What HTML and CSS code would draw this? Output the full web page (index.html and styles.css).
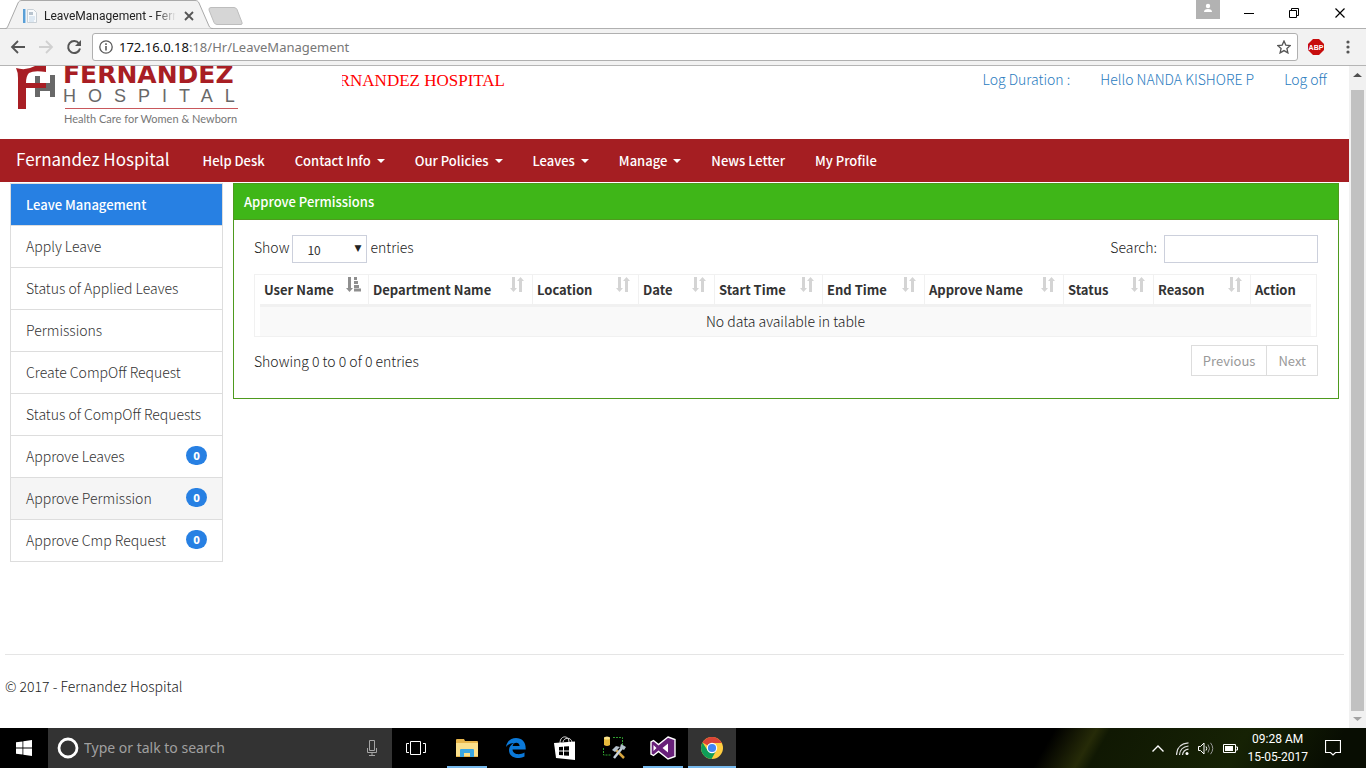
FILE: index.html
```html
<!DOCTYPE html>
<html lang="en">
<head>
<meta charset="utf-8">
<title>LeaveManagement - Fernandez Hospital</title>
<link rel="stylesheet" href="styles.css">
</head>
<body>
<svg class="defs" aria-hidden="true">
  <symbol id="sort-both" viewBox="0 0 16 17">
    <path d="M3 1h3v11h2l-3.500 4L1 12h2zM10 16V5H8l3.500-4L15 5h-2v11z"/>
  </symbol>
  <symbol id="sort-asc" viewBox="0 0 16 17">
    <path d="M3 1h3v11h2l-3.500 4L1 12h2zM9 1h3v3H9zM9 5h4v3H9zM9 9h5v3H9zM9 12.500h7v3H9z"/>
  </symbol>
</svg>

<div class="browser-tabs">
  <div class="tab">
    <svg class="tab-shape" viewBox="0 0 208 29" width="208" height="29"><path d="M0 28.500C2 28.500 2 28 3 26L13 3C14 1 15 .5 17 .5H190C192 .5 193 1 194 3L204 26C205 28 206 28.500 208 28.500" fill="#f2f2f2" stroke="#a9a9a9"/></svg>
    <svg class="tab-icon" width="16" height="16" viewBox="0 0 16 16"><path d="M1 1h2v14H1z" fill="#5a9fd6"/><path d="M3 1h1v14H3z" fill="#a9d0f0"/><path d="M5.500 1.500h6l3 3v10h-9z" fill="#f8fafc" stroke="#c9d0d6"/><path d="M7 4h4v3H7z" fill="#b8c4cf"/><path d="M7 9h6M7 11h6M7 13h5" stroke="#c2d6e8"/></svg>
    <span class="tab-title">LeaveManagement - Fernandez</span>
    <button class="plain" aria-label="Close tab"><svg width="10" height="10" viewBox="0 0 10 10"><path d="M1 1l8 8M9 1L1 9" stroke="#555" stroke-width="1.800"/></svg></button>
  </div>
  <button class="plain new-tab" aria-label="New tab"><svg width="36" height="18" viewBox="0 0 36 18"><path d="M3 .5h23q2 0 3 2l5 13q.6 2-1 2H9q-2 0-3-2L1 3Q.5.5 3 .5z" fill="#d6d6d6" stroke="#bdbdbd"/></svg></button>
  <div class="window-controls">
    <button class="plain account" aria-label="Account"><svg width="24" height="19" viewBox="0 0 24 19"><path d="M0 0h24v19H0z" fill="#b2b2b2"/><circle cx="12" cy="6" r="2.200" fill="#fff"/><path d="M8 12q0-3 4-3t4 3z" fill="#fff"/></svg></button>
    <button class="plain" aria-label="Minimize"><svg width="46" height="27" viewBox="0 0 46 27"><path d="M18 13.500h10" stroke="#000"/></svg></button>
    <button class="plain" aria-label="Restore"><svg width="46" height="27" viewBox="0 0 46 27"><path d="M17.500 10.500h7v7h-7zM19.500 10V8.500h7v7H25" fill="none" stroke="#000"/></svg></button>
    <button class="plain" aria-label="Close"><svg width="46" height="27" viewBox="0 0 46 27"><path d="M17.500 8.500l9 9M26.500 8.500l-9 9" stroke="#000" stroke-width="1.200"/></svg></button>
  </div>
</div>

<div class="toolbar">
  <button class="plain" aria-label="Back"><svg width="16" height="16" viewBox="0 0 16 16"><path d="M15 8H2M8 2L2 8l6 6" fill="none" stroke="#555" stroke-width="1.800"/></svg></button>
  <button class="plain" aria-label="Forward"><svg width="16" height="16" viewBox="0 0 16 16"><path d="M1 8h13M8 2l6 6-6 6" fill="none" stroke="#d0d0d0" stroke-width="1.800"/></svg></button>
  <button class="plain" aria-label="Reload"><svg width="16" height="16" viewBox="0 0 16 16"><path d="M13 4.500A6 6 0 1 0 14 9.500" fill="none" stroke="#555" stroke-width="2"/><path d="M15 1v6H9z" fill="#555"/></svg></button>
  <div class="address">
    <svg width="14" height="14" viewBox="0 0 14 14"><circle cx="7" cy="7" r="6.200" fill="none" stroke="#5a5a5a" stroke-width="1.300"/><path d="M6.200 6h1.600v4.500H6.200zM6.200 3.300h1.600v1.600H6.200z" fill="#5a5a5a"/></svg>
    <span class="url"><b>172.16.0.18</b>:18/Hr/LeaveManagement</span>
    <button class="plain" aria-label="Bookmark"><svg width="14" height="14" viewBox="0 0 14 14"><path d="M7 1l1.800 4.100 4.500.4-3.400 3 1 4.400L7 10.600l-3.900 2.300 1-4.400-3.400-3 4.500-.4z" fill="none" stroke="#555" stroke-width="1.300"/></svg></button>
  </div>
  <button class="plain abp" aria-label="Adblock"><svg width="16" height="16" viewBox="0 0 16 16"><path d="M5 0h6l5 5v6l-5 5H5l-5-5V5z" fill="#c70d0d"/><text x="8" y="11" text-anchor="middle">ABP</text></svg></button>
  <button class="plain" aria-label="Menu"><svg width="4" height="14" viewBox="0 0 4 14"><g fill="#555"><circle cx="2" cy="2" r="1.600"/><circle cx="2" cy="7" r="1.600"/><circle cx="2" cy="12" r="1.600"/></g></svg></button>
</div>

<div class="viewport">
  <div class="page">
    <header class="masthead">
      <svg class="logo" width="240" height="64" viewBox="0 0 240 64" role="img" aria-label="Fernandez Hospital">
        <path d="M16 2q10 3 19-2h11v6q-12-2-17 1-3 3-3 10h20v5H26v21h-8V12q0-6-2-10z" fill="#a81e24"/>
        <path d="M35 10h5v21h-5zM50 9h5v22h-5zM40 22h10v3H40zM46 17h4v5h-4z" fill="#686868"/>
        <path d="M26 17h20v5H26z" fill="#a81e24"/>
        <text class="logo-name" x="63" y="17">FERNANDEZ</text>
        <text class="logo-sub" x="63" y="36">HOSPITAL</text>
        <path d="M65 42.500h173" stroke="#c8585c"/>
        <text class="logo-tag" x="64" y="57">Health Care for Women &amp; Newborn</text>
      </svg>
      <div class="ticker"><span>FERNANDEZ HOSPITAL</span></div>
      <nav class="account-links">
        <a href="#">Log Duration :</a><a href="#">Hello NANDA KISHORE P</a><a href="#">Log off</a>
      </nav>
    </header>

    <nav class="navbar">
      <a class="brand" href="#">Fernandez Hospital</a>
      <a href="#">Help Desk</a>
      <a class="drop" href="#">Contact Info</a>
      <a class="drop" href="#">Our Policies</a>
      <a class="drop" href="#">Leaves</a>
      <a class="drop" href="#">Manage</a>
      <a href="#">News Letter</a>
      <a href="#">My Profile</a>
    </nav>

    <main class="columns">
      <nav class="side">
        <a class="active" href="#">Leave Management</a>
        <a href="#">Apply Leave</a>
        <a href="#">Status of Applied Leaves</a>
        <a href="#">Permissions</a>
        <a href="#">Create CompOff Request</a>
        <a href="#">Status of CompOff Requests</a>
        <a href="#">Approve Leaves <span class="badge">0</span></a>
        <a class="hover" href="#">Approve Permission <span class="badge">0</span></a>
        <a href="#">Approve Cmp Request <span class="badge">0</span></a>
      </nav>

      <section class="panel">
        <h2>Approve Permissions</h2>
        <div class="panel-body">
          <div class="controls">
            <label class="length">Show <span class="select"><select><option>10</option><option>25</option><option>50</option></select></span> entries</label>
            <label class="search">Search: <input type="text"></label>
          </div>
          <div class="table-wrap">
            <table>
              <colgroup><col class="c-user"><col class="c-dept"><col class="c-loc"><col class="c-date"><col class="c-start"><col class="c-end"><col class="c-appr"><col class="c-status"><col class="c-reason"><col></colgroup>
              <thead>
                <tr>
                  <th><div>User Name<svg class="on"><use href="#sort-asc"/></svg></div></th>
                  <th><div>Department Name<svg><use href="#sort-both"/></svg></div></th>
                  <th><div>Location<svg><use href="#sort-both"/></svg></div></th>
                  <th><div>Date<svg><use href="#sort-both"/></svg></div></th>
                  <th><div>Start Time<svg><use href="#sort-both"/></svg></div></th>
                  <th><div>End Time<svg><use href="#sort-both"/></svg></div></th>
                  <th><div>Approve Name<svg><use href="#sort-both"/></svg></div></th>
                  <th><div>Status<svg><use href="#sort-both"/></svg></div></th>
                  <th><div>Reason<svg><use href="#sort-both"/></svg></div></th>
                  <th><div>Action</div></th>
                </tr>
              </thead>
              <tbody><tr><td colspan="10">No data available in table</td></tr></tbody>
            </table>
          </div>
          <div class="table-foot">
            <span>Showing 0 to 0 of 0 entries</span>
            <div class="pager"><button disabled>Previous</button><button disabled>Next</button></div>
          </div>
        </div>
      </section>
    </main>

    <footer class="site-foot">© 2017 - Fernandez Hospital</footer>
  </div>
  <div class="scrollbar">
    <svg width="17" height="17" viewBox="0 0 17 17"><path d="M4 11l4.500-4L13 11z" fill="#505050"/></svg>
    <div class="thumb"></div>
    <svg width="17" height="17" viewBox="0 0 17 17"><path d="M4 6l4.500 4L13 6z" fill="#a3a3a3"/></svg>
  </div>
</div>

<div class="taskbar">
  <button class="plain start" aria-label="Start"><svg width="16" height="16" viewBox="0 0 16 16"><path d="M0 2.300l6.500-.9v6.200H0zM7.300 1.300L16 0v7.600H7.300zM0 8.400h6.500v6.200L0 13.700zM7.300 8.400H16V16l-8.700-1.300z" fill="#fff"/></svg></button>
  <div class="cortana">
    <svg width="22" height="22" viewBox="0 0 22 22"><circle cx="11" cy="11" r="9" fill="none" stroke="#fff" stroke-width="2.800"/></svg>
    <input type="text" placeholder="Type or talk to search" aria-label="Search">
    <svg width="12" height="18" viewBox="0 0 12 18"><path d="M3.500 1.500h5v10h-5zM1.500 9v4.500h9V9M6 14v2.500M3 16.500h6" fill="none" stroke="#a5a5a5"/></svg>
  </div>
  <button class="plain task view" aria-label="Task view"><svg width="20" height="14" viewBox="0 0 20 14"><path d="M4.500.5h10v13h-10zM3 2.500H.5v9H3M17 2.500h2.500v9H17" fill="none" stroke="#fff"/></svg></button>
  <button class="plain task open" aria-label="File Explorer"><svg width="22" height="18" viewBox="0 0 22 18"><path d="M0 1q0-1 1-1h7l1 2h12q1 0 1 1v15H0z" fill="#e8b64c"/><path d="M0 4h22v13H0z" fill="#fbe08c"/><path d="M4 18v-7q0-1 1-1h12q1 0 1 1v7h-4v-4H8v4z" fill="#3aa7e4"/></svg></button>
  <button class="plain task" aria-label="Edge"><svg width="20" height="20" viewBox="0 0 20 20"><path d="M0 9C1 3 5 0 10 0c6 0 10 4 9.700 11.500H6.500c.2 5 7 6 12 3v4C13 21.500 3 20.500 3 12c0-3 2-5.500 5-7C4.500 5 2 6.500 0 9zM6.600 8h7c0-4.500-6.500-4.500-7 0z" fill="#0b79d9"/></svg></button>
  <button class="plain task" aria-label="Store"><svg width="22" height="24" viewBox="0 0 22 24"><path d="M6 7c0-8 9-8 9-1M9 6c1-5 8-5 9 0" fill="none" stroke="#ddd"/><path d="M0 7l21-1.500V24L2 22z" fill="#fff"/><path d="M5 11l4-.3v3.800H5zM10 10.600l5-.4v4.300h-5zM5 15.500h4v3.800l-4-.3zM10 15.500h5v4.300l-5-.4z" fill="#000"/></svg></button>
  <button class="plain task" aria-label="SQL tools"><svg width="24" height="24" viewBox="0 0 24 24"><path d="M2 2v7q3 2 6 0V2z" fill="#e5b93c"/><ellipse cx="5" cy="2" rx="3" ry="1.500" fill="#fbe38a"/><path d="M11 1.500h9.500v9M1.500 12v7H9" fill="none" stroke="#2f9e2f" stroke-dasharray="2 1"/><path d="M13 13l9 9" stroke="#d8a640" stroke-width="2.500"/><path d="M20 12L12 22" stroke="#c7d3dd" stroke-width="2.500"/><path d="M10 14l4-4 4 1-5 5zM19 8l-1 4 4 2 2-3" fill="#b4c1cc"/></svg></button>
  <button class="plain task open" aria-label="Visual Studio"><svg width="26" height="24" viewBox="0 0 26 24"><path d="M18 1l7 2.500v17L18 23 8.500 15.500l-5 4L1 18V6l2.500-1.500 5 4z" fill="#68217a" stroke="#fff" stroke-width="1.400"/><path d="M3.500 9v6l3-3zM18 7.500L12.500 12l5.500 4.500z" fill="#fff"/></svg></button>
  <button class="plain task open current" aria-label="Chrome"><svg width="22" height="22" viewBox="0 0 22 22"><circle cx="11" cy="11" r="11" fill="#ffcd40"/><path d="M11 11L1.500 5.500A11 11 0 0 1 20.500 5.500L20.800 6H11z" fill="#db4437"/><path d="M1.500 5.500A11 11 0 0 0 10.500 22l4.800-8.500L7 14z" fill="#0f9d58"/><circle cx="11" cy="11" r="5.200" fill="#fff"/><circle cx="11" cy="11" r="4.100" fill="#4285f4"/></svg></button>
  <div class="tray">
    <svg width="12" height="7" viewBox="0 0 12 7"><path d="M.5 6.500L6 1l5.500 5.500" fill="none" stroke="#fff" stroke-width="1.400"/></svg>
    <svg class="wifi" width="13" height="13" viewBox="0 0 13 13"><path d="M.5 13Q1 1.500 12.500.8M3.500 13Q4 5 12.500 4M6.500 13Q7 8 12.500 7.200" fill="none" stroke="#ddd" stroke-width="1.200"/><circle cx="11" cy="11.500" r="1.500" fill="#fff"/></svg>
    <svg width="16" height="13" viewBox="0 0 16 13"><path d="M.5 4.500h2L6 1v11L2.500 8.500h-2z" fill="none" stroke="#fff"/><path d="M8 4.500q1.500 2 0 4" fill="none" stroke="#fff"/><path d="M10 2.500q3 4 0 8M12.500.8q4.500 5.700 0 11.400" fill="none" stroke="#999"/></svg>
    <svg width="15" height="9" viewBox="0 0 15 9"><path d="M.5.5h12v8H.5zM13 3h1.500v3H13" fill="none" stroke="#fff"/><path d="M2 2h8v5H2z" fill="#fff"/></svg>
    <div class="clock"><span>09:28 AM</span><span>15-05-2017</span></div>
    <svg width="16" height="16" viewBox="0 0 16 16"><path d="M.5.500h15v12h-5L8 15l-2.500-2.500h-5z" fill="none" stroke="#fff" stroke-width="1.200"/></svg>
  </div>
</div>
</body>
</html>
```
FILE: styles.css
```css
* { box-sizing: border-box; }

body {
  margin: 0;
  height: 100vh;
  display: flex;
  flex-direction: column;
  overflow: hidden;
  background: #fff;
  color: #222;
  font: 300 14px/20px "Noto Sans CJK SC", "Noto Sans", sans-serif;
}

a { color: inherit; text-decoration: none; }
svg { display: block; flex: none; }
.defs { position: absolute; width: 0; height: 0; }
.plain { padding: 0; border: 0; background: none; display: flex; align-items: center; justify-content: center; }

/* Browser frame */
.browser-tabs { display: flex; align-items: flex-start; height: 28px; flex: none; padding-left: 5px; }
.tab { position: relative; z-index: 1; display: flex; align-items: center; width: 208px; height: 29px; padding: 2px 19px 0 17px; }
.tab-shape { position: absolute; left: 0; top: 0; }
.tab-icon, .tab-title, .tab button { position: relative; }
.tab-title {
  flex: 1; overflow: hidden; white-space: nowrap; margin: 0 8px 0 6px;
  color: #222; font: 12px/16px Roboto, sans-serif;
  mask-image: linear-gradient(to right, #000 85%, transparent);
}
.new-tab { height: 18px; margin-top: 7px; margin-left: -5px; }
.window-controls { display: flex; align-items: flex-start; margin-left: auto; padding-right: 2px; }
.account { margin-right: 6px; }
.toolbar {
  display: flex; align-items: center; gap: 12px; height: 38px; flex: none; padding: 0 16px 0 10px;
  background: #f2f2f2; border-top: 1px solid #b0b0b0; border-bottom: 1px solid #b5b5b5;
}
.address {
  flex: 1; display: flex; align-items: center; gap: 6px; height: 28px; margin-right: -2px; margin-left: -2px; padding: 0 6px;
  background: #fff; border: 1px solid #b0b0b0; border-radius: 3px;
}
.url { flex: 1; color: #777; font: 13px/20px "Noto Sans", sans-serif; }
.url b { color: #111; font-weight: 400; }
.abp { margin-right: 10px; }
.abp text { fill: #fff; font: bold 7px "Liberation Sans", sans-serif; }

/* Page area */
.viewport { flex: 1; display: flex; min-height: 0; }
.page { flex: 1; min-width: 0; overflow: hidden; }
.scrollbar { width: 17px; display: flex; flex-direction: column; background: #f1f1f1; }
.thumb { flex: 1; margin: 7px 2px 0; background: #c1c1c1; }

.masthead { display: flex; align-items: flex-start; height: 73px; }
.logo-name { fill: #a81e24; font: bold 25px "DejaVu Sans", sans-serif; }
.logo-sub { fill: #686868; font: 18px "Liberation Sans", sans-serif; letter-spacing: 12px; }
.logo-tag { fill: #777; font: 11px Lato, sans-serif; }
.ticker {
  display: flex; justify-content: flex-end; width: 163px; margin: 5px 0 0 102px; overflow: hidden;
  color: #f00; font: 17px/20px "Liberation Serif", serif; white-space: nowrap;
}
.account-links { display: flex; gap: 30px; margin-left: auto; padding: 3px 22px 0 0; color: #2a7cc0; }

.navbar {
  display: flex; align-items: center; gap: 30px; height: 43px; padding: 0 16px;
  background: #a51e22; color: #fff; font-size: 13px; font-weight: 500;
}
.brand { margin-right: 3px; font-size: 17px; font-weight: 400; line-height: 24px; padding-bottom: 4px; }
.drop { display: flex; align-items: center; gap: 6px; }
.drop::after { content: ""; border: 4px solid transparent; border-top-color: #fff; border-bottom: 0; }

.columns { display: grid; grid-template-columns: 213px 1fr; gap: 10px; align-items: start; padding: 1px 10px 0; }

.side { border: 1px solid #ddd; color: #333; }
.side a { display: flex; justify-content: space-between; align-items: center; height: 42px; padding: 0 15px 2px; border-bottom: 1px solid #ddd; white-space: nowrap; }
.side a:last-child { border-bottom: 0; height: 41px; }
.side .active { padding-bottom: 0; background: #2780e3; color: #fff; font-size: 13px; font-weight: 500; }
.side .hover { background: #f5f5f5; }
.badge {
  width: 21px; height: 19px; margin-bottom: 1px; border-radius: 10px; background: #2780e3; color: #fff;
  font-size: 11px; font-weight: 900; line-height: 19px; text-align: center;
}

.panel { border: 1px solid #4e9a1e; }
.panel h2 {
  margin: 0; padding: 8px 10px 7px; border-bottom: 1px solid #4e9a1e; background: #3fb618; color: #fff;
  font-size: 13px; font-weight: 500; line-height: 20px;
}
.panel-body { padding: 15px 20px 19px; }
.controls { display: flex; justify-content: space-between; height: 28px; }
.length, .search { display: flex; gap: 3px; line-height: 24px; }
.search { gap: 7px; }
.select { position: relative; }
.select::after { content: "▼"; position: absolute; right: 6px; top: 0; font: 9px/26px "DejaVu Sans", sans-serif; pointer-events: none; }
.controls select {
  display: block; appearance: none; width: 75px; height: 28px; padding: 2px 14px 0; border: 1px solid #ccd0dc;
  border-radius: 0; background: #fff; color: #333; font: 12px/20px "Noto Sans CJK SC", sans-serif;
}
.controls input { width: 154px; height: 28px; padding: 0 8px; border: 1px solid #ccd0dc; font: inherit; }

.table-wrap { margin: 11px 1px 0 0; padding: 0 5px; border: 1px solid #f1f1f1; }
table { width: 100%; table-layout: fixed; border-collapse: separate; border-spacing: 0; }
th { padding: 0; border-bottom: 3px solid #f1f1f1; border-right: 1px solid #f1f1f1; text-align: left; white-space: nowrap; color: #333; font-size: 13px; font-weight: 700; }
th:last-child { border-right: 0; }
th div { display: flex; justify-content: space-between; height: 29px; padding: 5px 7px 0 4px; }
th svg { width: 16px; height: 17px; margin-top: -4px; fill: #d4d4d4; }
th svg.on { fill: #8f8f8f; }
td { padding: 4px 5px 5px; background: #f9f9f9; text-align: center; }
.c-user { width: 10.37%; }
.c-dept { width: 15.6%; }
.c-loc { width: 10.09%; }
.c-date { width: 7.23%; }
.c-start { width: 10.28%; }
.c-end { width: 9.71%; }
.c-appr { width: 13.22%; }
.c-status { width: 8.56%; }
.c-reason { width: 9.23%; }

.table-foot { display: flex; justify-content: space-between; align-items: flex-start; height: 42px; padding-top: 8px; line-height: 32px; }
.pager { display: flex; }
.pager button { height: 31px; padding: 0 11px; border: 1px solid #ddd; background: #fff; color: #999; font: inherit; font-size: 13px; font-weight: 400; line-height: 20px; }
.pager button + button { margin-left: -1px; }

.site-foot { margin: 92px 5px 0; padding-top: 21px; border-top: 1px solid #e5e5e5; }

/* Desktop taskbar */
.taskbar {
  display: flex; height: 40px; flex: none; color: #fff;
  background:
    linear-gradient(120deg, transparent 76%, #262b08 79%, #101803 80%, #162204 90%, #080d02 97%),
    #000;
}
.start { width: 48px; }
.cortana { display: flex; align-items: center; gap: 5px; width: 344px; padding: 0 14px 0 9px; background: #333; }
.cortana input { flex: 1; min-width: 0; padding: 0; border: 0; background: none; font: 14px/20px "Noto Sans", sans-serif; }
.cortana input::placeholder { color: #a0a0a0; opacity: 1; }
.task { position: relative; width: 48px; margin-right: 1px; }
.view { margin-right: 3px; }
.open::after { content: ""; position: absolute; left: 4px; right: 4px; bottom: 0; height: 2px; background: #76b9ed; }
.current { background: #333; }
.current::after { left: 0; right: 0; }
.tray { display: flex; align-items: center; gap: 9px; margin-left: auto; padding-right: 25px; }
.wifi { margin-left: 3px; }
.clock { display: flex; flex-direction: column; align-items: center; margin-right: 8px; font: 12px/18px Roboto, sans-serif; }
```
